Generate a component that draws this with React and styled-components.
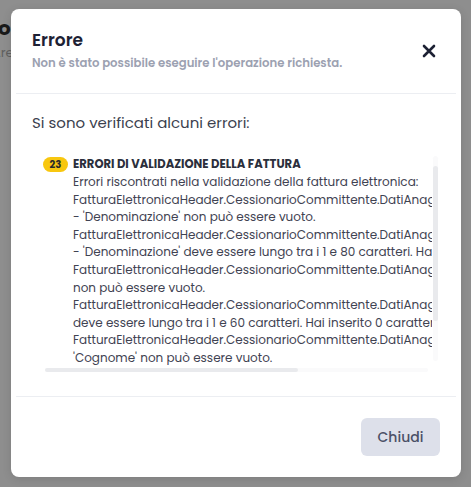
import React from "react";
import styled, { createGlobalStyle } from "styled-components";

const Global = createGlobalStyle`
  html, body { margin: 0; padding: 0; }
  body {
    width: 471px;
    height: 487px;
    overflow: hidden;
    background: #8e8e8e;
    font-family: "Poppins", "Open Sans", "Noto Sans", sans-serif;
  }
`;

const Page = styled.div`
  position: relative;
  width: 471px;
  height: 487px;
  overflow: hidden;
`;

const Backdrop = styled.div`
  padding: 16px 0 0 0;
  margin-left: -13px;
`;

const BackTitle = styled.div`
  font-size: 20px;
  font-weight: 700;
  color: #1a1a1a;
  line-height: 24px;
  white-space: nowrap;
`;

const BackSub = styled.div`
  margin-top: 3px;
  margin-left: 5px;
  font-size: 13px;
  color: #606060;
  white-space: nowrap;
`;

const Modal = styled.div`
  position: absolute;
  left: 11px;
  top: 9px;
  width: 450px;
  height: 468px;
  background: #ffffff;
  border-radius: 8px;
  box-shadow: 0 2px 10px rgba(0, 0, 0, 0.12);
  display: flex;
  flex-direction: column;
  box-sizing: border-box;
`;

const Header = styled.div`
  display: flex;
  align-items: flex-start;
  justify-content: space-between;
  height: 85px;
  box-sizing: border-box;
  margin: 0 5px;
  padding: 19px 18px 0 16px;
  border-bottom: 1px solid #eceef2;
`;

const HeaderText = styled.div`
  display: flex;
  flex-direction: column;
`;

const Title = styled.h2`
  margin: 0;
  font-size: 17px;
  font-weight: 600;
  line-height: 24px;
  color: #1d2134;
`;

const Subtitle = styled.p`
  margin: 3px 0 0 0;
  font-size: 11.7px;
  font-weight: 600;
  line-height: 16px;
  color: #9ca1b1;
`;

const CloseButton = styled.button`
  margin-top: 14px;
  width: 18px;
  height: 18px;
  padding: 0;
  border: none;
  background: transparent;
  display: flex;
  align-items: center;
  justify-content: center;
  cursor: pointer;
`;

const Body = styled.div`
  flex: 1;
  padding: 18px 21px 0 21px;
  display: flex;
  flex-direction: column;
`;

const Intro = styled.p`
  margin: 0;
  font-size: 15px;
  line-height: 22px;
  color: #3b3f4e;
`;

const ErrorBox = styled.div`
  position: relative;
  margin-top: 21px;
  margin-left: 5px;
  width: 403px;
  height: 219px;
`;

const Viewport = styled.div`
  width: 395px;
  height: 212px;
  overflow: hidden;
  padding-left: 6px;
  box-sizing: border-box;
`;

const ScrollTrack = styled.div`
  position: absolute;
  background: #fafafb;
  border-radius: 3px;
  ${(p) =>
    p.$vertical
      ? `right: 2px; top: 1px; width: 5px; height: 205px;`
      : `left: 8px; top: 213px; height: 4px; width: 383px;`}
`;

const ScrollThumb = styled.div`
  position: absolute;
  background: #e9eaed;
  border-radius: 3px;
  ${(p) =>
    p.$vertical
      ? `right: 2px; top: 11px; width: 5px; height: 155px;`
      : `left: 8px; top: 213px; height: 4px; width: 253px;`}
`;

const ErrorRow = styled.div`
  display: flex;
  align-items: flex-start;
  gap: 5px;
  width: max-content;
`;

const Badge = styled.span`
  flex: none;
  margin-top: 2px;
  display: inline-flex;
  align-items: center;
  justify-content: center;
  width: 25px;
  height: 15px;
  border-radius: 8px;
  background: #f8c70f;
  color: #2a2a2a;
  font-size: 10px;
  font-weight: 700;
  line-height: 15px;
`;

const ErrorContent = styled.div`
  display: flex;
  flex-direction: column;
`;

const ErrorTitle = styled.div`
  font-size: 11.6px;
  font-weight: 700;
  line-height: 18px;
  color: #2b2f3c;
`;

const ErrorLine = styled.div`
  font-size: 12px;
  line-height: 17.6px;
  color: #3f4352;
  white-space: nowrap;
`;

const Footer = styled.div`
  margin: 0 5px;
  border-top: 1px solid #eceef2;
  height: 81px;
  box-sizing: border-box;
  display: flex;
  align-items: center;
  justify-content: flex-end;
  padding-right: 16px;
`;

const CloseAction = styled.button`
  width: 79px;
  height: 38px;
  border: none;
  border-radius: 6px;
  background: #dde0ea;
  color: #4b5067;
  font-family: inherit;
  font-size: 14px;
  font-weight: 500;
  cursor: pointer;
`;

const lines = [
  "Errori riscontrati nella validazione della fattura elettronica:",
  "FatturaElettronicaHeader.CessionarioCommittente.DatiAnagrafici.Anagrafica.Denominazione",
  "- 'Denominazione' non può essere vuoto.",
  "FatturaElettronicaHeader.CessionarioCommittente.DatiAnagrafici.Anagrafica.Denominazione",
  "- 'Denominazione' deve essere lungo tra i 1 e 80 caratteri. Hai inserito 0 caratteri.",
  "FatturaElettronicaHeader.CessionarioCommittente.DatiAnagrafici.Anagrafica.Nome - 'Nome'",
  "non può essere vuoto.",
  "FatturaElettronicaHeader.CessionarioCommittente.DatiAnagrafici.Anagrafica.Nome - 'Nome'",
  "deve essere lungo tra i 1 e 60 caratteri. Hai inserito 0 caratteri.",
  "FatturaElettronicaHeader.CessionarioCommittente.DatiAnagrafici.Anagrafica.Cognome -",
  "'Cognome' non può essere vuoto.",
  "FatturaElettronicaHeader.CessionarioCommittente.DatiAnagrafici.Anagrafica.Cognome -",
  "'Cognome' deve essere lungo tra i 1 e 60 caratteri. Hai inserito 0 caratteri.",
];

export default function App() {
  return (
    <Page>
      <Global />
      <Backdrop>
        <BackTitle>Fornitori</BackTitle>
        <BackSub>Area fatture</BackSub>
      </Backdrop>
      <Modal role="dialog">
        <Header>
          <HeaderText>
            <Title>Errore</Title>
            <Subtitle>Non è stato possibile eseguire l'operazione richiesta.</Subtitle>
          </HeaderText>
          <CloseButton aria-label="Chiudi">
            <svg width="14" height="14" viewBox="0 0 14 14">
              <path d="M2 2 L12 12 M12 2 L2 12" stroke="#1d2134" strokeWidth="2.6" strokeLinecap="round" />
            </svg>
          </CloseButton>
        </Header>
        <Body>
          <Intro>Si sono verificati alcuni errori:</Intro>
          <ErrorBox>
            <Viewport>
              <ErrorRow>
                <Badge>23</Badge>
                <ErrorContent>
                  <ErrorTitle>ERRORI DI VALIDAZIONE DELLA FATTURA</ErrorTitle>
                  {lines.map((l, i) => (
                    <ErrorLine key={i}>{l}</ErrorLine>
                  ))}
                </ErrorContent>
              </ErrorRow>
            </Viewport>
            <ScrollTrack $vertical />
            <ScrollThumb $vertical />
            <ScrollTrack />
            <ScrollThumb />
          </ErrorBox>
        </Body>
        <Footer>
          <CloseAction>Chiudi</CloseAction>
        </Footer>
      </Modal>
    </Page>
  );
}
